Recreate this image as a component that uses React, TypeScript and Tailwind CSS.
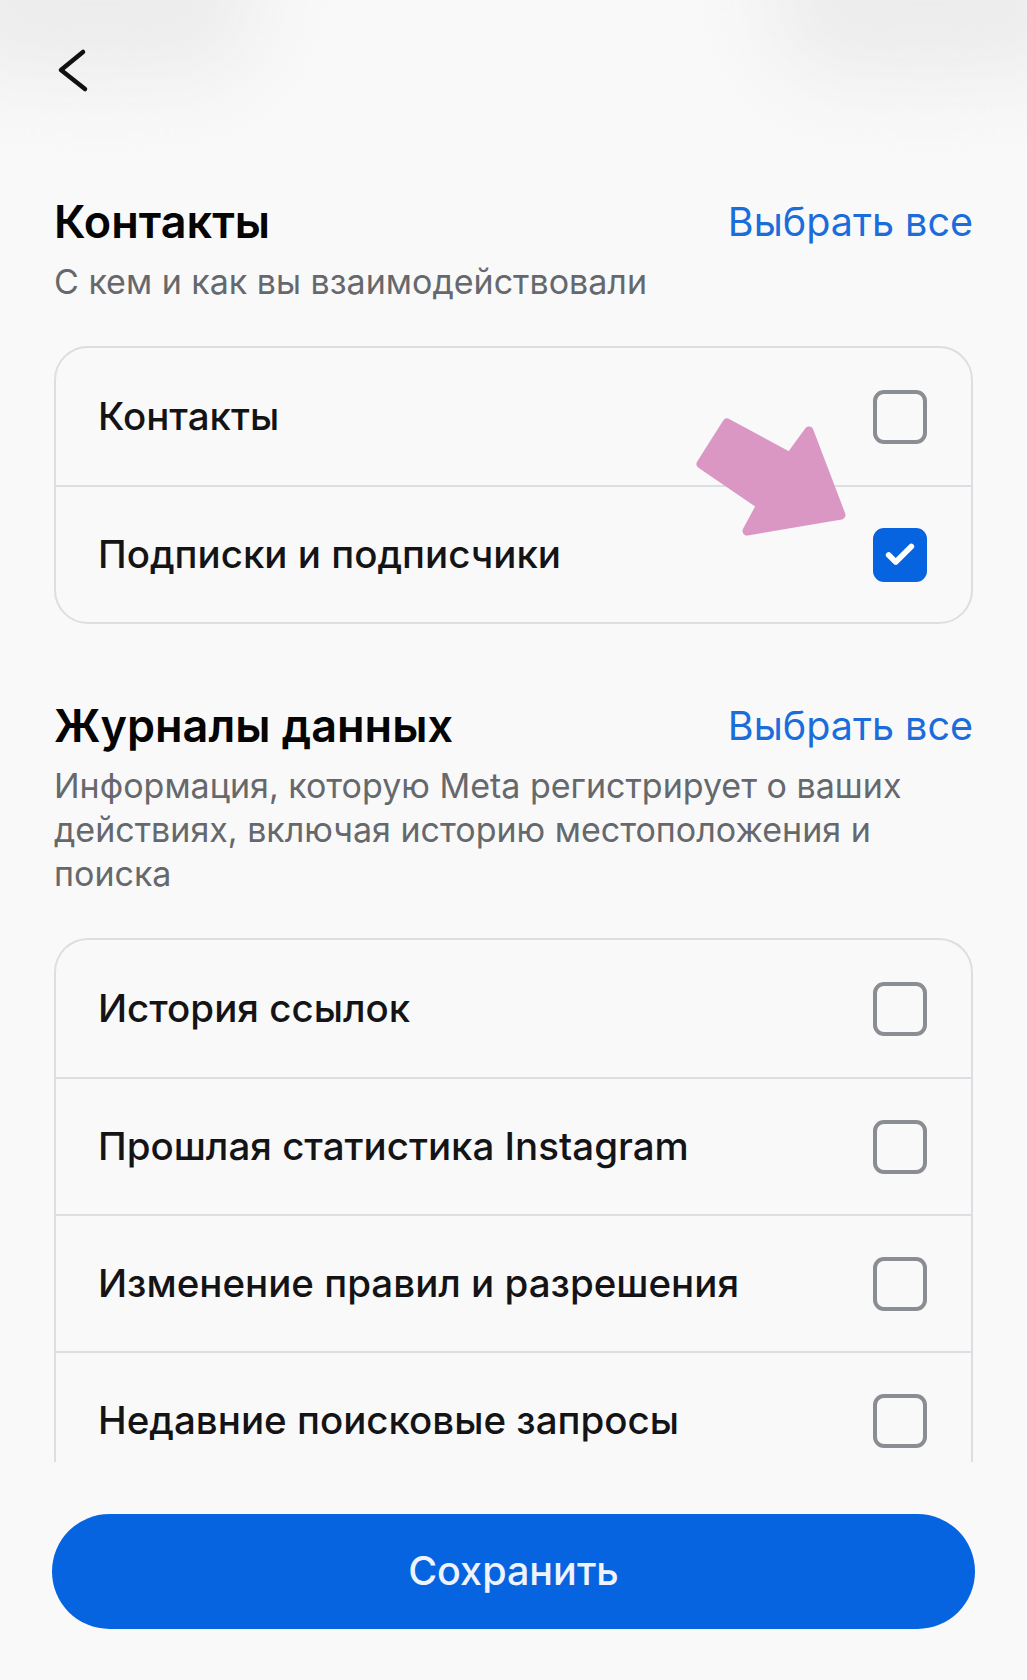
import { Check } from 'lucide-react';

type Item = {
  label: string;
  checked: boolean;
};

const contacts: Item[] = [
  { label: 'Контакты', checked: false },
  { label: 'Подписки и подписчики', checked: true },
];

const logs: Item[] = [
  { label: 'История ссылок', checked: false },
  { label: 'Прошлая статистика Instagram', checked: false },
  { label: 'Изменение правил и разрешения', checked: false },
  { label: 'Недавние поисковые запросы', checked: false },
];

function Checkbox({ checked }: { checked: boolean }) {
  if (checked) {
    return (
      <div className="flex h-[54px] w-[54px] shrink-0 items-center justify-center rounded-[11px] bg-[#0764e0]">
        <Check size={34} strokeWidth={4} className="text-white" />
      </div>
    );
  }
  return <div className="h-[54px] w-[54px] shrink-0 rounded-[11px] border-[4px] border-[#8a8d91]" />;
}

function Row({ item, first }: { item: Item; first: boolean }) {
  return (
    <div
      className={`flex h-[137px] shrink-0 items-center justify-between pl-[42px] pr-[44px] ${first ? '' : 'border-t-2 border-[#dcdee2]'}`}
    >
      <span className="text-[38.5px] font-medium text-[#141416]">{item.label}</span>
      <Checkbox checked={item.checked} />
    </div>
  );
}

function SectionHeader({ title, children }: { title: string; children: React.ReactNode }) {
  return (
    <div>
      <div className="flex items-center justify-between">
        <h2 className="text-[45px] font-semibold leading-[50px] text-[#050505]">{title}</h2>
        <button className="text-[39.5px] leading-[50px] text-[#1b6ddb]">Выбрать все</button>
      </div>
      <p className="mt-[13px] text-[34px] leading-[44px] text-[#65686c]">{children}</p>
    </div>
  );
}

export default function App() {
  return (
    <div
      className="relative flex h-[1680px] w-[1027px] flex-col overflow-hidden bg-[#f9f9f9]"
      style={{ fontFamily: 'Inter, "Noto Sans", sans-serif' }}
    >
      {/* soft corner shading from the phone screen */}
      <div className="pointer-events-none absolute -left-[60px] -top-[80px] h-[160px] w-[320px] rounded-full bg-[#ececec] blur-[40px]" />
      <div className="pointer-events-none absolute -right-[60px] -top-[80px] h-[160px] w-[320px] rounded-full bg-[#ececec] blur-[40px]" />

      <div className="relative flex h-[1462px] flex-col overflow-hidden px-[54px]">
        <div className="pt-[44px]">
          <svg width="40" height="50" viewBox="0 0 40 50" fill="none">
            <polyline
              points="29,8 7,26 31,45"
              stroke="#111111"
              strokeWidth="4.5"
              strokeLinecap="round"
              strokeLinejoin="round"
            />
          </svg>
        </div>

        <div className="mt-[103px]">
          <SectionHeader title="Контакты">С кем и как вы взаимодействовали</SectionHeader>
        </div>

        <div className="relative mt-[42px] flex flex-col rounded-[34px] border-2 border-[#dcdee2]">
          {contacts.map((item, i) => (
            <Row key={item.label} item={item} first={i === 0} />
          ))}
          <svg
            className="pointer-events-none absolute left-0 top-0 overflow-visible"
            width="1"
            height="1"
          >
            <polygon
              points="671,75 734,109 753,83 785,167 691,183 705,157 645,116"
              fill="#db97c4"
              stroke="#db97c4"
              strokeWidth="9"
              strokeLinejoin="round"
            />
          </svg>
        </div>

        <div className="mt-[77px]">
          <SectionHeader title="Журналы данных">
            Информация, которую Meta регистрирует о ваших действиях, включая историю местоположения и поиска
          </SectionHeader>
        </div>

        <div className="mt-[42px] flex flex-col rounded-t-[34px] border-2 border-b-0 border-[#dcdee2]">
          {logs.map((item, i) => (
            <Row key={item.label} item={item} first={i === 0} />
          ))}
        </div>
      </div>

      <div className="px-[52px] pt-[52px]">
        <button className="flex h-[115px] w-full items-center justify-center rounded-full bg-[#0764e0] text-[39.5px] font-medium text-[#eef3fd]">
          Сохранить
        </button>
      </div>
    </div>
  );
}
